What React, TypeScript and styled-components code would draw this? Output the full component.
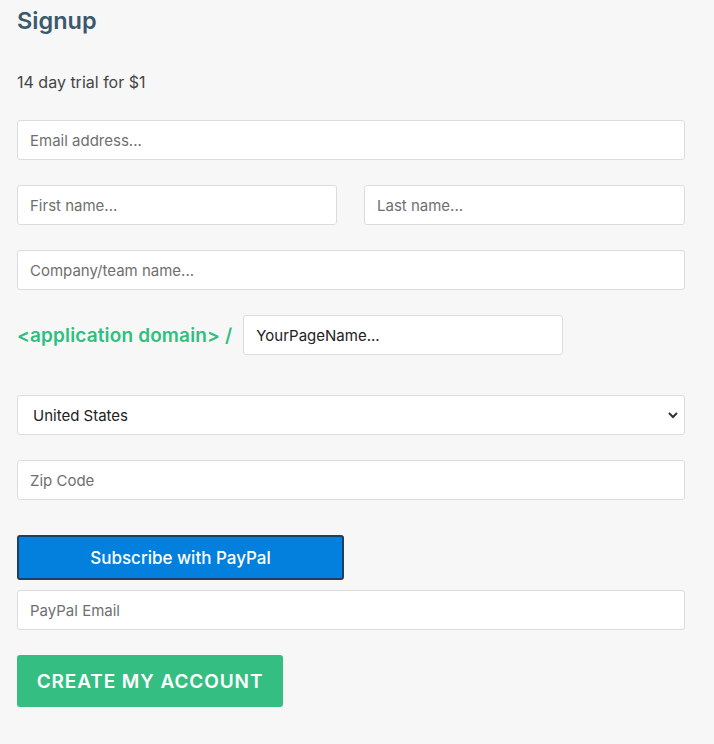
import * as React from 'react';
import styled, { createGlobalStyle } from 'styled-components';

const GlobalStyle = createGlobalStyle`
  html, body {
    margin: 0;
    padding: 0;
    background: #f7f7f7;
  }
  body {
    font-family: Inter, "Noto Sans", sans-serif;
    color: #444;
  }
`;

const Page = styled.div`
  width: 668px;
  padding: 6px 0 0 17px;
`;

const Title = styled.h2`
  margin: 0;
  font-size: 23.5px;
  line-height: 30px;
  font-weight: 600;
  color: #3b596b;
`;

const Trial = styled.p`
  margin: 35px 0 0;
  font-size: 16px;
  line-height: 22px;
  color: #454545;
`;

const Form = styled.form`
  display: flex;
  flex-direction: column;
  margin-top: 27px;
`;

const Field = styled.div<{ $gap?: number }>`
  margin-top: ${p => p.$gap ?? 25}px;
  &:first-child {
    margin-top: 0;
  }
`;

const Split = styled.div`
  display: grid;
  grid-template-columns: 320px 321px;
  justify-content: space-between;
`;

const Input = styled.input<{ $width?: number }>`
  box-sizing: border-box;
  display: block;
  width: ${p => (p.$width ? `${p.$width}px` : '100%')};
  height: 40px;
  padding: 0 12px;
  border: 1px solid #dcdcdc;
  border-radius: 3px;
  background: #fff;
  font-family: inherit;
  font-size: 15px;
  color: #333;
  outline: none;
  &::placeholder {
    color: #6f6f6f;
  }
`;

const DomainRow = styled.div`
  display: flex;
  align-items: center;
  gap: 11px;
`;

const DomainLabel = styled.span`
  font-size: 19px;
  font-weight: 600;
  color: #2fbf7f;
  letter-spacing: 0.15px;
`;

const DomainInput = styled(Input)`
  color: #222;
`;

const SelectWrap = styled.div`
  position: relative;
`;

const Select = styled.select`
  box-sizing: border-box;
  display: block;
  width: 100%;
  height: 40px;
  padding: 0 15px;
  border: 1px solid #dcdcdc;
  border-radius: 3px;
  background: #fff;
  font-family: inherit;
  font-size: 15px;
  color: #222;
  appearance: none;
  outline: none;
`;

const Chevron = styled.svg`
  position: absolute;
  right: 6px;
  top: 15px;
  pointer-events: none;
`;

const PayPalButton = styled.button`
  box-sizing: border-box;
  display: block;
  width: 327px;
  height: 45px;
  border: 2px solid #1d3f61;
  border-radius: 3px;
  background: #0380dd;
  color: #fff;
  font-family: inherit;
  font-size: 17px;
  font-weight: 500;
  cursor: pointer;
`;

const CreateButton = styled.button`
  box-sizing: border-box;
  display: block;
  width: 266px;
  height: 52px;
  border: none;
  border-radius: 3px;
  background: #35be82;
  color: #fff;
  font-family: inherit;
  font-size: 19px;
  font-weight: 600;
  letter-spacing: 0.9px;
  cursor: pointer;
`;

export default function App() {
  return (
    <>
      <GlobalStyle />
      <Page>
        <Title>Signup</Title>
        <Trial>14 day trial for $1</Trial>
        <Form onSubmit={e => e.preventDefault()}>
          <Field>
            <Input placeholder="Email address..." />
          </Field>
          <Field>
            <Split>
              <Input placeholder="First name..." />
              <Input placeholder="Last name..." />
            </Split>
          </Field>
          <Field>
            <Input placeholder="Company/team name..." />
          </Field>
          <Field>
            <DomainRow>
              <DomainLabel>&lt;application domain&gt; /</DomainLabel>
              <DomainInput $width={320} defaultValue="YourPageName..." />
            </DomainRow>
          </Field>
          <Field $gap={40}>
            <SelectWrap>
              <Select defaultValue="US">
                <option value="US">United States</option>
                <option value="CA">Canada</option>
                <option value="GB">United Kingdom</option>
              </Select>
              <Chevron width="12" height="10" viewBox="0 0 12 10">
                <path d="M2 3l4 4 4-4" fill="none" stroke="#333" strokeWidth="2" />
              </Chevron>
            </SelectWrap>
          </Field>
          <Field>
            <Input placeholder="Zip Code" />
          </Field>
          <Field $gap={35}>
            <PayPalButton type="button">Subscribe with PayPal</PayPalButton>
          </Field>
          <Field $gap={10}>
            <Input placeholder="PayPal Email" />
          </Field>
          <Field>
            <CreateButton type="submit">CREATE MY ACCOUNT</CreateButton>
          </Field>
        </Form>
      </Page>
    </>
  );
}
